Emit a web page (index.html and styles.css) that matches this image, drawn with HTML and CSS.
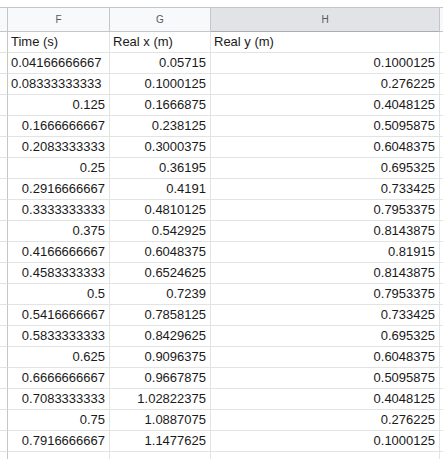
FILE: index.html
```html
<!DOCTYPE html>
<html>
<head>
<meta charset="utf-8">
<link rel="stylesheet" href="styles.css">
</head>
<body>
<div class="sheet">
  <div class="corner"></div>
  <div class="colhead">F</div>
  <div class="colhead">G</div>
  <div class="colhead sel">H</div>
  <div class="colhead edge"></div>

  <div class="stub"></div><div class="cell">Time (s)</div><div class="cell">Real x (m)</div><div class="cell">Real y (m)</div><div class="cell edge"></div>
  <div class="stub"></div><div class="cell">0.04166666667</div><div class="cell num">0.05715</div><div class="cell num">0.1000125</div><div class="cell edge"></div>
  <div class="stub"></div><div class="cell">0.08333333333</div><div class="cell num">0.1000125</div><div class="cell num">0.276225</div><div class="cell edge"></div>
  <div class="stub"></div><div class="cell num">0.125</div><div class="cell num">0.1666875</div><div class="cell num">0.4048125</div><div class="cell edge"></div>
  <div class="stub"></div><div class="cell num">0.1666666667</div><div class="cell num">0.238125</div><div class="cell num">0.5095875</div><div class="cell edge"></div>
  <div class="stub"></div><div class="cell num">0.2083333333</div><div class="cell num">0.3000375</div><div class="cell num">0.6048375</div><div class="cell edge"></div>
  <div class="stub"></div><div class="cell num">0.25</div><div class="cell num">0.36195</div><div class="cell num">0.695325</div><div class="cell edge"></div>
  <div class="stub"></div><div class="cell num">0.2916666667</div><div class="cell num">0.4191</div><div class="cell num">0.733425</div><div class="cell edge"></div>
  <div class="stub"></div><div class="cell num">0.3333333333</div><div class="cell num">0.4810125</div><div class="cell num">0.7953375</div><div class="cell edge"></div>
  <div class="stub"></div><div class="cell num">0.375</div><div class="cell num">0.542925</div><div class="cell num">0.8143875</div><div class="cell edge"></div>
  <div class="stub"></div><div class="cell num">0.4166666667</div><div class="cell num">0.6048375</div><div class="cell num">0.81915</div><div class="cell edge"></div>
  <div class="stub"></div><div class="cell num">0.4583333333</div><div class="cell num">0.6524625</div><div class="cell num">0.8143875</div><div class="cell edge"></div>
  <div class="stub"></div><div class="cell num">0.5</div><div class="cell num">0.7239</div><div class="cell num">0.7953375</div><div class="cell edge"></div>
  <div class="stub"></div><div class="cell num">0.5416666667</div><div class="cell num">0.7858125</div><div class="cell num">0.733425</div><div class="cell edge"></div>
  <div class="stub"></div><div class="cell num">0.5833333333</div><div class="cell num">0.8429625</div><div class="cell num">0.695325</div><div class="cell edge"></div>
  <div class="stub"></div><div class="cell num">0.625</div><div class="cell num">0.9096375</div><div class="cell num">0.6048375</div><div class="cell edge"></div>
  <div class="stub"></div><div class="cell num">0.6666666667</div><div class="cell num">0.9667875</div><div class="cell num">0.5095875</div><div class="cell edge"></div>
  <div class="stub"></div><div class="cell num">0.7083333333</div><div class="cell num">1.02822375</div><div class="cell num">0.4048125</div><div class="cell edge"></div>
  <div class="stub"></div><div class="cell num">0.75</div><div class="cell num">1.0887075</div><div class="cell num">0.276225</div><div class="cell edge"></div>
  <div class="stub"></div><div class="cell num">0.7916666667</div><div class="cell num">1.1477625</div><div class="cell num">0.1000125</div><div class="cell edge"></div>
  <div class="stub"></div><div class="cell"></div><div class="cell"></div><div class="cell"></div><div class="cell edge"></div>
</div>
</body>
</html>
```
FILE: styles.css
```css
html, body {
  margin: 0;
  padding: 0;
  background: #ffffff;
  overflow: hidden;
}
body {
  font-family: "Liberation Sans", Arial, sans-serif;
  padding-top: 7px;
}
.sheet {
  display: grid;
  grid-template-columns: 8px 102px 101px 229px 1fr;
  grid-auto-rows: 21px;
  grid-template-rows: 24px;
  border-top: 1px solid #c4c7c5;
}
.sheet > div {
  box-sizing: border-box;
}
.corner {
  background: #f8f9fa;
  border-right: 1px solid #c4c7c5;
  border-bottom: 1px solid #c4c7c5;
}
.colhead {
  background: #f8f9fa;
  border-right: 1px solid #c4c7c5;
  border-bottom: 1px solid #c4c7c5;
  color: #575a5e;
  font-size: 10px;
  display: flex;
  align-items: center;
  justify-content: center;
}
.colhead.sel {
  background: #e1e3e6;
  border-bottom-color: #a9acb0;
}
.colhead.edge {
  border-right: none;
}
.stub {
  border-right: 1px solid #c4c7c5;
  border-bottom: 1px solid #e2e3e3;
}
.cell {
  border-right: 1px solid #e2e3e3;
  border-bottom: 1px solid #e2e3e3;
  font-size: 13px;
  color: #1a1a1a;
  padding: 0 3px;
  line-height: 20px;
  white-space: nowrap;
  overflow: hidden;
}
.cell.num {
  text-align: right;
  padding-right: 4px;
}
.cell.edge {
  border-right: none;
}
```
